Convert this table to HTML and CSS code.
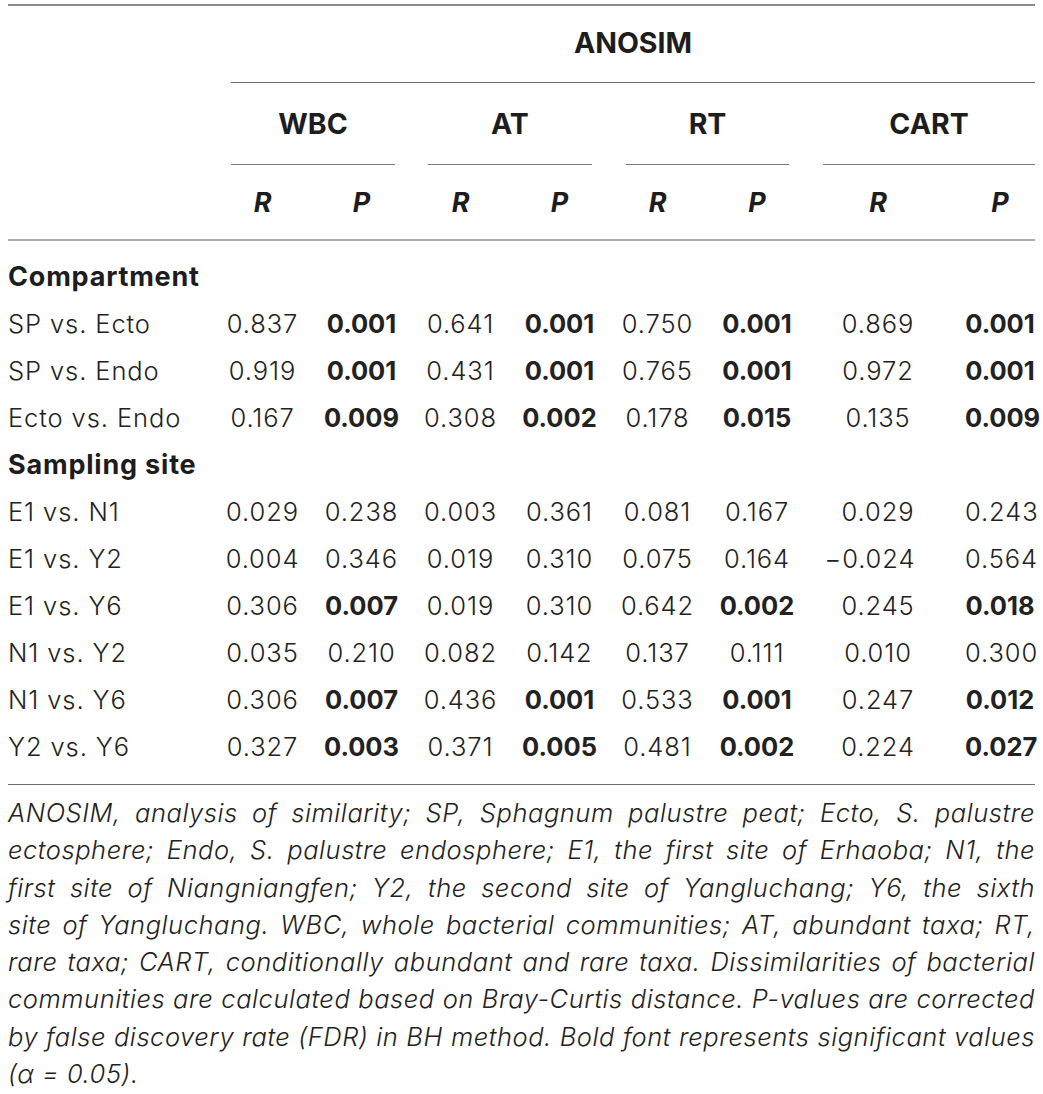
FILE: index.html
```html
<!DOCTYPE html>
<html lang="en">
<head>
<meta charset="utf-8">
<title>ANOSIM</title>
<link rel="stylesheet" href="styles.css">
</head>
<body>
<div class="table">
  <div class="rule-top"></div>
  <div class="grid head">
    <div class="h-anosim">ANOSIM</div>
    <div class="grp g1">WBC</div>
    <div class="grp g2">AT</div>
    <div class="grp g3">RT</div>
    <div class="grp g4">CART</div>
    <div class="sub c2">R</div>
    <div class="sub c3">P</div>
    <div class="sub c4">R</div>
    <div class="sub c5">P</div>
    <div class="sub c6">R</div>
    <div class="sub c7">P</div>
    <div class="sub c8">R</div>
    <div class="sub c9">P</div>
  </div>
  <div class="rule-mid"></div>
  <div class="grid body">
    <div class="sec">Compartment</div>

    <div class="lab">SP vs. Ecto</div><div class="v">0.837</div><div class="v b">0.001</div><div class="v">0.641</div><div class="v b">0.001</div><div class="v">0.750</div><div class="v b">0.001</div><div class="v">0.869</div><div class="v last b">0.001</div>
    <div class="lab">SP vs. Endo</div><div class="v">0.919</div><div class="v b">0.001</div><div class="v">0.431</div><div class="v b">0.001</div><div class="v">0.765</div><div class="v b">0.001</div><div class="v">0.972</div><div class="v last b">0.001</div>
    <div class="lab">Ecto vs. Endo</div><div class="v">0.167</div><div class="v b">0.009</div><div class="v">0.308</div><div class="v b">0.002</div><div class="v">0.178</div><div class="v b">0.015</div><div class="v">0.135</div><div class="v last b">0.009</div>

    <div class="sec">Sampling site</div>

    <div class="lab">E1 vs. N1</div><div class="v">0.029</div><div class="v">0.238</div><div class="v">0.003</div><div class="v">0.361</div><div class="v">0.081</div><div class="v">0.167</div><div class="v">0.029</div><div class="v last">0.243</div>
    <div class="lab">E1 vs. Y2</div><div class="v">0.004</div><div class="v">0.346</div><div class="v">0.019</div><div class="v">0.310</div><div class="v">0.075</div><div class="v">0.164</div><div class="v neg">&minus;0.024</div><div class="v last">0.564</div>
    <div class="lab">E1 vs. Y6</div><div class="v">0.306</div><div class="v b">0.007</div><div class="v">0.019</div><div class="v">0.310</div><div class="v">0.642</div><div class="v b">0.002</div><div class="v">0.245</div><div class="v last b">0.018</div>
    <div class="lab">N1 vs. Y2</div><div class="v">0.035</div><div class="v">0.210</div><div class="v">0.082</div><div class="v">0.142</div><div class="v">0.137</div><div class="v">0.111</div><div class="v">0.010</div><div class="v last">0.300</div>
    <div class="lab">N1 vs. Y6</div><div class="v">0.306</div><div class="v b">0.007</div><div class="v">0.436</div><div class="v b">0.001</div><div class="v">0.533</div><div class="v b">0.001</div><div class="v">0.247</div><div class="v last b">0.012</div>
    <div class="lab">Y2 vs. Y6</div><div class="v">0.327</div><div class="v b">0.003</div><div class="v">0.371</div><div class="v b">0.005</div><div class="v">0.481</div><div class="v b">0.002</div><div class="v">0.224</div><div class="v last b">0.027</div>
  </div>
  <div class="rule-bot"></div>
  <p class="note">
    <span class="ln">ANOSIM, analysis of similarity; SP, Sphagnum palustre peat; Ecto, S. palustre</span>
    <span class="ln">ectosphere; Endo, S. palustre endosphere; E1, the first site of Erhaoba; N1, the</span>
    <span class="ln">first site of Niangniangfen; Y2, the second site of Yangluchang; Y6, the sixth</span>
    <span class="ln">site of Yangluchang. WBC, whole bacterial communities; AT, abundant taxa; RT,</span>
    <span class="ln">rare taxa; CART, conditionally abundant and rare taxa. Dissimilarities of bacterial</span>
    <span class="ln">communities are calculated based on Bray-Curtis distance. P-values are corrected</span>
    <span class="ln">by false discovery rate (FDR) in BH method. Bold font represents significant values</span>
    <span class="ln end">(&alpha; = 0.05).</span>
  </p>
</div>
</body>
</html>
```
FILE: styles.css
```css
html, body {
  margin: 0;
  padding: 0;
  background: #ffffff;
}

body {
  font-family: Inter, "Liberation Sans", sans-serif;
  color: #222222;
}

.table {
  width: 1027px;
  margin: 4px 0 0 8px;
}

.rule-top {
  height: 2px;
  background: #8a8a8a;
}

.grid {
  display: grid;
  grid-template-columns: 205px 99px 99px 99px 99px 97px 102px 140px 87px;
}

/* header */
.head {
  grid-template-rows: 77px 82px 74px;
  font-weight: 700;
  font-size: 28.5px;
  color: #1d1d1d;
}

.h-anosim {
  grid-row: 1;
  grid-column: 2 / 10;
  margin-left: 18px;
  border-bottom: 1px solid #6e6e6e;
  display: flex;
  align-items: center;
  justify-content: center;
  padding-bottom: 4px;
  box-sizing: border-box;
}

.grp {
  grid-row: 2;
  border-bottom: 1px solid #7a7a7a;
  display: flex;
  align-items: center;
  justify-content: center;
  box-sizing: border-box;
}
.g1 { grid-column: 2 / 4; margin: 0 16px 0 18px; }
.g2 { grid-column: 4 / 6; margin: 0 17px 0 17px; }
.g3 { grid-column: 6 / 8; margin: 0 19px 0 17px; }
.g4 { grid-column: 8 / 10; margin: 0 0 0 15px; }

.sub {
  grid-row: 3;
  display: flex;
  align-items: center;
  justify-content: center;
  font-style: italic;
  font-size: 27px;
}
.c2 { grid-column: 2; }
.c3 { grid-column: 3; }
.c4 { grid-column: 4; }
.c5 { grid-column: 5; }
.c6 { grid-column: 6; }
.c7 { grid-column: 7; }
.c8 { grid-column: 8; }
.c9 { grid-column: 9; padding-left: 17px; }

.rule-mid {
  height: 2px;
  background: #ababab;
}

/* body */
.body {
  grid-auto-rows: 47px;
  padding: 12px 0 14px;
  font-size: 25.5px;
  font-weight: 300;
  line-height: 47px;
  letter-spacing: 0.9px;
}

.sec {
  grid-column: 1 / 10;
  font-weight: 700;
  font-size: 27px;
  letter-spacing: 0.8px;
  color: #1d1d1d;
}

.lab {
  grid-column: 1;
  white-space: nowrap;
}

.v {
  text-align: center;
  white-space: nowrap;
}
.v.neg { padding-right: 16px; }
.v.last { padding-left: 17px; }
.b {
  font-weight: 700;
  letter-spacing: 0;
}

.rule-bot {
  height: 1px;
  background: #6e6e6e;
}

/* footnote */
.note {
  margin: 9px 0 0;
  font-size: 25.5px;
  font-weight: 300;
  font-style: italic;
  line-height: 37.3px;
  letter-spacing: 0.55px;
}

.ln {
  display: block;
  text-align: justify;
  text-align-last: justify;
  white-space: nowrap;
}
.ln.end {
  text-align-last: left;
}
```
